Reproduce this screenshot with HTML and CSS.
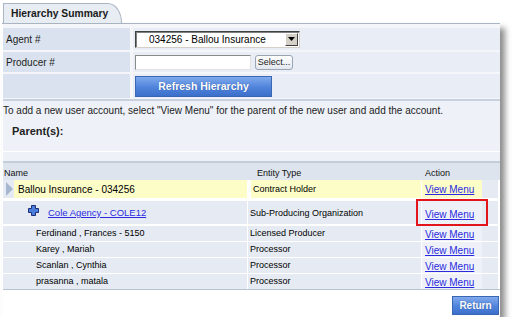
FILE: index.html
```html
<!DOCTYPE html>
<html>
<head>
<meta charset="utf-8">
<link rel="stylesheet" href="styles.css">
</head>
<body>
<div class="page">
  <div class="tabbar"><div class="tab">Hierarchy Summary</div></div>
  <div class="panel">
    <div class="form">
      <div class="frow r1">
        <div class="flabel">Agent #</div>
        <div class="ffield">
          <div class="select">
            <span class="sel-text">034256 - Ballou Insurance</span>
            <span class="sel-btn"><svg width="7" height="4" viewBox="0 0 7 4"><polygon points="0,0 7,0 3.5,4" fill="#000"/></svg></span>
          </div>
        </div>
      </div>
      <div class="frow r2">
        <div class="flabel">Producer #</div>
        <div class="ffield">
          <span class="input"></span>
          <span class="btn-small">Select...</span>
        </div>
      </div>
      <div class="frow r3">
        <div class="flabel"></div>
        <div class="ffield"><span class="btn-blue refresh">Refresh Hierarchy</span></div>
      </div>
    </div>
    <div class="intro">
      <div class="note">To add a new user account, select "View Menu" for the parent of the new user and add the account.</div>
      <div class="parents">Parent(s):</div>
      <div class="blank"></div>
    </div>
    <div class="table">
      <div class="thead">
        <div class="th th-name">Name</div>
        <div class="th th-type">Entity Type</div>
        <div class="th th-act">Action</div>
      </div>
      <div class="trow top">
        <div class="cell name-top">
          <svg class="tri" width="9" height="14" viewBox="0 0 9 14"><polygon points="1,0 8,7 1,14" fill="#a7b7cf"/></svg>
          <span class="top-name">Ballou Insurance - 034256</span>
        </div>
        <div class="cell type type-top">Contract Holder</div>
        <div class="cell act"><span class="vm vm-top"><a href="#">View Menu</a></span></div>
      </div>
      <div class="trow org">
        <div class="cell name name-org">
          <svg class="plus" width="11" height="11" viewBox="0 0 11 11"><path d="M3.5 0.5h4v3h3v4h-3v3h-4v-3h-3v-4h3z" fill="#4b7ddb" stroke="#1d2f78" stroke-width="1"/></svg>
          <a href="#">Cole Agency - COLE12</a>
        </div>
        <div class="cell type">Sub-Producing Organization</div>
        <div class="cell act"><span class="vm"><a href="#">View Menu</a><span class="mark"></span></span></div>
      </div>
      <div class="trow sub first">
        <div class="cell name">Ferdinand , Frances - 5150</div>
        <div class="cell type">Licensed Producer</div>
        <div class="cell act"><span class="vm"><a href="#">View Menu</a></span></div>
      </div>
      <div class="trow sub">
        <div class="cell name">Karey , Mariah</div>
        <div class="cell type">Processor</div>
        <div class="cell act"><span class="vm"><a href="#">View Menu</a></span></div>
      </div>
      <div class="trow sub">
        <div class="cell name">Scanlan , Cynthia</div>
        <div class="cell type">Processor</div>
        <div class="cell act"><span class="vm"><a href="#">View Menu</a></span></div>
      </div>
      <div class="trow sub">
        <div class="cell name">prasanna , matala</div>
        <div class="cell type">Processor</div>
        <div class="cell act"><span class="vm"><a href="#">View Menu</a></span></div>
      </div>
    </div>
    <div class="footer"><span class="btn-blue ret">Return</span></div>
  </div>
</div>
</body>
</html>
```

FILE: styles.css
```css
* { box-sizing: border-box; }
html, body { margin: 0; padding: 0; background: #fff; }
body {
  font-family: "Liberation Sans", Arial, sans-serif;
  font-size: 10px;
  color: #000;
}
a { color: #2a2ae0; text-decoration: underline; }

.page { width: 498px; margin-left: 2px; padding-top: 3px; }

.tabbar { height: 20px; display: flex; padding-left: 1px; }
.tab {
  width: 119px;
  height: 20px;
  background: #e8edf4;
  border: 1px solid #aab5c3;
  border-bottom: none;
  border-radius: 0 14px 0 0 / 0 20px 0 0;
  font-weight: bold;
  font-size: 10.3px;
  line-height: 19px;
  padding-left: 7px;
  color: #1b1b1b;
}

.panel {
  border-top: 1px solid #a9b4c2;
  background: #fff;
  box-shadow: 5px 5px 6px rgba(0, 0, 0, 0.45);
  padding: 0 0 2px 1px;
}

/* form */
.form {
  background: #f4f6fa;
  padding-top: 4px;
  padding-bottom: 1px;
  border-bottom: 2px solid #c8d1dd;
  display: flex;
  flex-direction: column;
  gap: 2px;
}
.frow { display: flex; gap: 3px; }
.r1 { height: 22px; }
.r2 { height: 20px; }
.r3 { height: 24px; }
.flabel {
  width: 127px;
  background: #d9e2ee;
  padding-left: 3px;
  display: flex;
  align-items: center;
  color: #1d1d1d;
}
.ffield {
  flex: 1;
  background: #e8edf6;
  padding-left: 2px;
  display: flex;
  align-items: center;
  gap: 4px;
}
.select {
  width: 165px;
  height: 17px;
  background: #fff;
  border: 1px solid #404040;
  border-right-color: #d4d0c8;
  border-bottom-color: #d4d0c8;
  box-shadow: inset 1px 1px 0 #808080;
  display: flex;
  align-items: center;
  justify-content: space-between;
  padding: 0 1px 0 13px;
}
.sel-btn {
  width: 13px;
  height: 13px;
  background: #d4d0c8;
  border: 1px solid #fff;
  border-right-color: #404040;
  border-bottom-color: #404040;
  display: flex;
  align-items: center;
  justify-content: center;
}
.input {
  width: 116px;
  height: 15px;
  background: #fff;
  border: 1px solid #8a8a8a;
  border-right-color: #e0e0e0;
  border-bottom-color: #e0e0e0;
}
.btn-small {
  width: 38px;
  height: 15px;
  border: 1px solid #9aa4b2;
  border-radius: 3px;
  background: linear-gradient(#ffffff, #e3e7ee);
  font-size: 9px;
  display: flex;
  align-items: center;
  justify-content: center;
  color: #222;
}
.btn-blue {
  display: flex;
  align-items: center;
  justify-content: center;
  background: linear-gradient(#80aaec, #4f83db 55%, #3c6fca);
  border: 1px solid #3a66b4;
  color: #fff;
  font-weight: bold;
  text-shadow: 0 0 1px #2a4f96;
}
.refresh { width: 137px; height: 21px; font-size: 10.5px; }

/* intro */
.intro { background: #eef2f8; padding-bottom: 9px; }
.note { height: 20px; line-height: 20px; color: #222; white-space: nowrap; }
.parents {
  height: 20px;
  line-height: 20px;
  padding-left: 9px;
  font-size: 11px;
  font-weight: bold;
  color: #222;
}
.blank { height: 11px; border-bottom: 1px solid #fff; }

/* table */
.table { background: #fff; border-bottom: 1px solid #b8c4d2; }
.thead {
  display: grid;
  grid-template-columns: 244px 173px 76px;
  column-gap: 1px;
  height: 19px;
  border-top: 2px solid #c3cdd9;
  background: #dde4ed;
  align-items: end;
  padding-bottom: 1px;
  font-size: 9px;
  line-height: 11px;
  color: #111;
}
.th-name { padding-left: 1px; }
.th-type { padding-left: 9px; }
.th-act { padding-left: 3px; }

.trow {
  display: grid;
  grid-template-columns: 244px 173px 76px;
  column-gap: 1px;
}
.cell { background: #e6ebf3; display: flex; align-items: flex-start; }
.trow.top { height: 18px; margin-bottom: 3px; }
.trow.org { height: 23px; margin-bottom: 2px; }
.trow.sub { height: 15px; margin-bottom: 1px; }
.trow.sub:last-child { margin-bottom: 0; }

.name-top { align-items: center; padding-left: 2px; }
.tri { flex: none; }
.top-name {
  flex: 1;
  align-self: stretch;
  background: #fdfdc8;
  display: flex;
  align-items: center;
  padding-left: 4px;
  font-size: 10px;
}
.type-top {
  background: #fdfdc8;
  align-items: center;
  padding-left: 6px;
  font-size: 9.5px;
  margin-left: 3px;
}
.name-org { align-items: center; padding-left: 25px; font-size: 9.5px; }
.plus { margin-right: 9px; margin-top: -5px; }

.type { font-size: 9px; padding-left: 2px; }
.trow.org .type { align-items: center; }
.trow.sub .name { font-size: 9px; padding-left: 33px; padding-top: 2px; line-height: 11px; }
.trow.sub .type { padding-top: 2px; line-height: 11px; }

.act { background: #e6ebf3; }
.vm {
  position: relative;
  width: 60px;
  align-self: stretch;
  background: #eef2f8;
  padding-left: 3px;
  font-size: 10px;
  display: flex;
  align-items: flex-end;
}
.vm-top { background: #fdfdc8; align-items: center; }
.trow.org .vm { align-items: center; padding-top: 3px; }
.trow.sub .vm { line-height: 12px; }
.mark {
  position: absolute;
  left: -6px;
  top: -2px;
  width: 72px;
  height: 27px;
  border: 2px solid #e2141c;
}

.footer {
  display: flex;
  justify-content: flex-end;
  padding: 6px 1px 0 0;
}
.ret { width: 47px; height: 19px; font-size: 10px; }
```
